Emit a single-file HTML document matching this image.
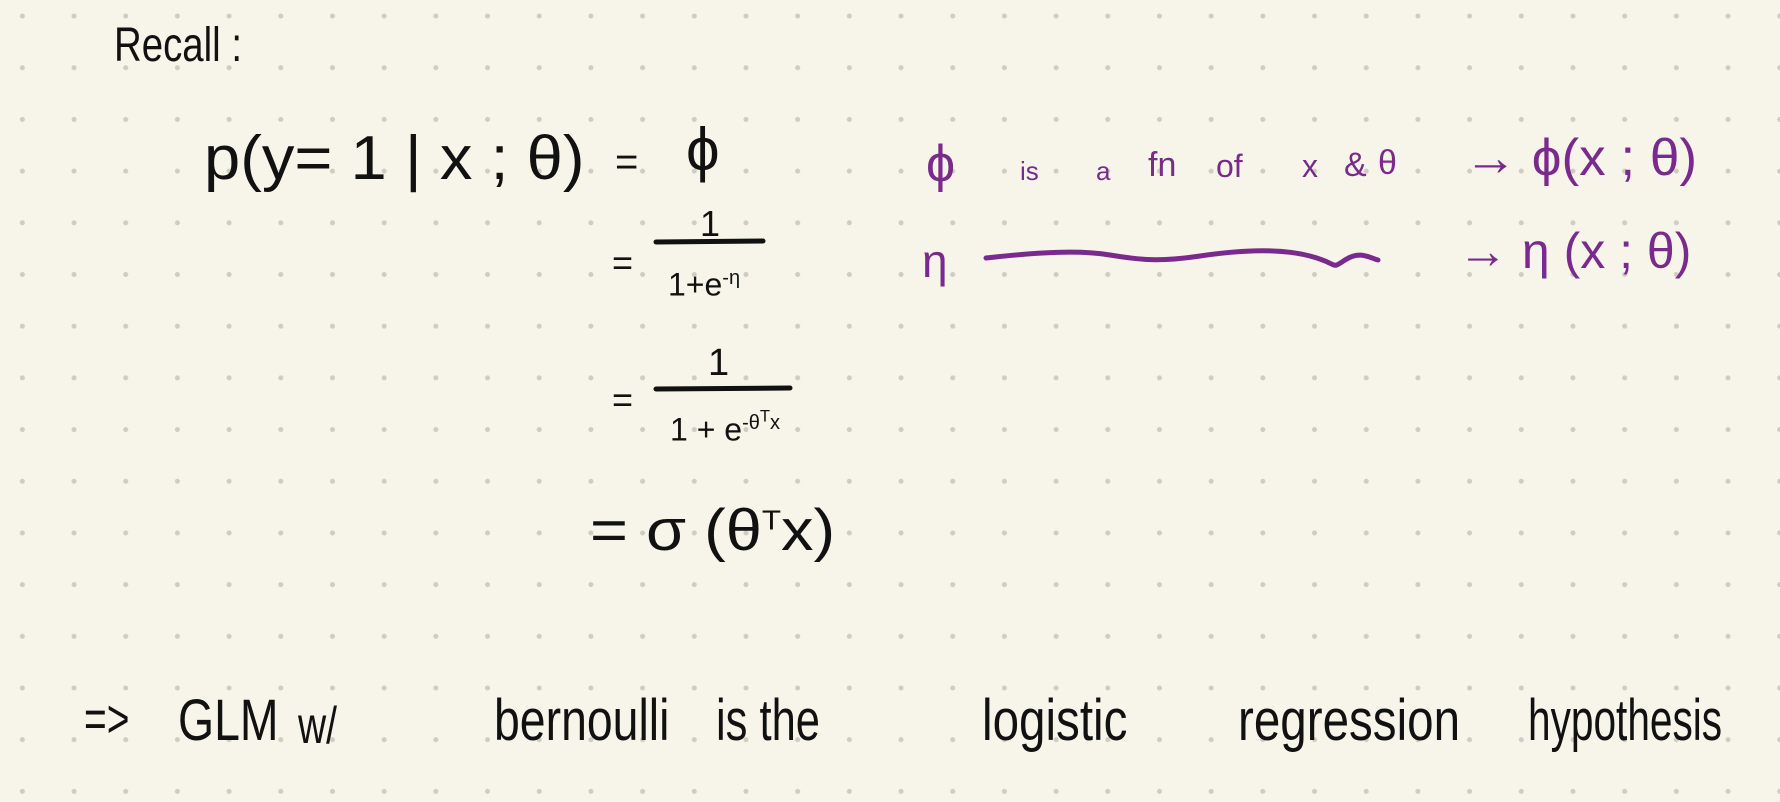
<!DOCTYPE html>
<html><head><meta charset="utf-8"><style>
html,body{margin:0;padding:0}
body{width:1780px;height:802px;position:relative;overflow:hidden;background:#f7f5e9;
background-image:radial-gradient(circle,#cfcdc2 2.2px,transparent 2.8px);
background-size:51.7px 51.7px;background-position:-3.5px -9.8px;
font-family:"Liberation Sans Narrow","Liberation Sans",sans-serif;color:#111}
.t{position:absolute;white-space:nowrap;line-height:1;transform-origin:0 0}
.p{color:#7a2a8c}
svg{position:absolute;left:0;top:0}
</style></head><body>
<div class="t" style="left:114px;top:22px;font-size:48px;transform:scaleX(.8)">Recall :</div>

<div class="t" style="left:204px;top:128px;font-size:62px;transform:scaleX(1.05)">p(y= 1 | x ; θ)</div>
<div class="t" style="left:615px;top:142px;font-size:40px">=</div>
<div class="t" style="left:686px;top:120px;font-size:60px">ϕ</div>

<div class="t" style="left:612px;top:245px;font-size:36px">=</div>
<div class="t" style="left:700px;top:206px;font-size:36px">1</div>
<div class="t" style="left:668px;top:268px;font-size:32px">1+e<sup style="font-size:20px">-η</sup></div>

<div class="t" style="left:612px;top:382px;font-size:36px">=</div>
<div class="t" style="left:708px;top:344px;font-size:38px">1</div>
<div class="t" style="left:670px;top:408px;font-size:32px">1 + e<sup style="font-size:20px">-θ<sup>T</sup>x</sup></div>

<div class="t" style="left:590px;top:502px;font-size:58px;transform:scaleX(1.12)">= σ (θ<sup style="font-size:28px">T</sup>x)</div>

<svg width="1780" height="802">
<path d="M656 242 L763 241" stroke="#111" stroke-width="5" fill="none" stroke-linecap="round"/>
<path d="M656 389 L790 388" stroke="#111" stroke-width="5" fill="none" stroke-linecap="round"/>
<path d="M986 258 C1040 252,1080 250,1110 255 S1160 262,1200 256 S1280 248,1310 256 S1330 270,1345 260 S1370 258,1378 260" stroke="#7a2a8c" stroke-width="5" fill="none" stroke-linecap="round"/>
</svg>

<div class="t p" style="left:926px;top:138px;font-size:52px">ϕ</div>
<div class="t p" style="left:1020px;top:158px;font-size:26px">is</div>
<div class="t p" style="left:1096px;top:158px;font-size:26px">a</div>
<div class="t p" style="left:1148px;top:148px;font-size:34px">fn</div>
<div class="t p" style="left:1216px;top:150px;font-size:32px">of</div>
<div class="t p" style="left:1302px;top:150px;font-size:32px">x</div>
<div class="t p" style="left:1344px;top:148px;font-size:34px">&amp;</div>
<div class="t p" style="left:1378px;top:146px;font-size:34px">θ</div>
<div class="t p" style="left:1464px;top:132px;font-size:52px;transform:scaleX(1.02)">→ ϕ(x ; θ)</div>

<div class="t p" style="left:922px;top:238px;font-size:46px">η</div>
<div class="t p" style="left:1458px;top:226px;font-size:50px;transform:scaleX(1.0)">→ η (x ; θ)</div>

<div class="t" style="left:84px;top:692px;font-size:54px;transform:scaleX(.72)">=&gt;</div>
<div class="t" style="left:178px;top:692px;font-size:58px;transform:scaleX(.8)">GLM</div>
<div class="t" style="left:298px;top:700px;font-size:52px;transform:scaleX(.75)">w/</div>
<div class="t" style="left:494px;top:692px;font-size:58px;transform:scaleX(.8)">bernoulli</div>
<div class="t" style="left:716px;top:692px;font-size:58px;transform:scaleX(.75)">is the</div>
<div class="t" style="left:982px;top:692px;font-size:58px;transform:scaleX(.82)">logistic</div>
<div class="t" style="left:1238px;top:692px;font-size:58px;transform:scaleX(.82)">regression</div>
<div class="t" style="left:1528px;top:692px;font-size:58px;transform:scaleX(.7)">hypothesis</div>
</body></html>
